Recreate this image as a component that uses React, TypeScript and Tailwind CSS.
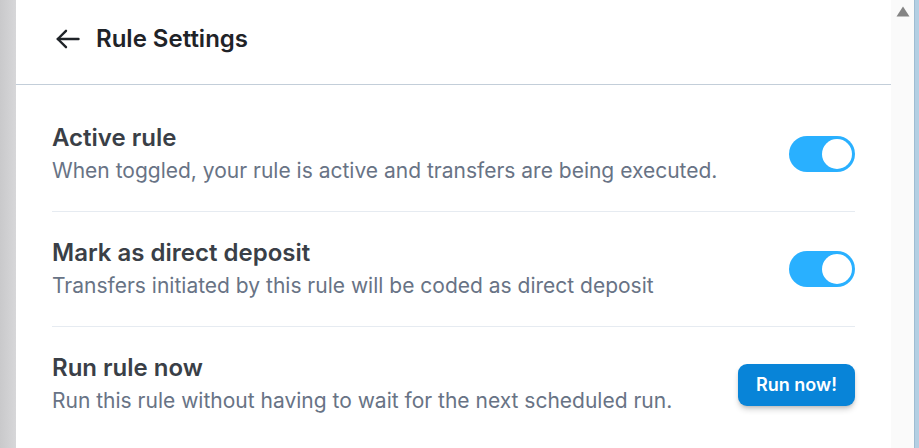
import React from 'react';

type RuleRowProps = {
  title: string;
  description: string;
  children: React.ReactNode;
  last?: boolean;
};

const Toggle = ({ on }: { on: boolean }) => (
  <button
    type="button"
    className={`flex h-[36px] w-[66px] items-center rounded-full p-[3px] ${on ? 'justify-end bg-[#29b0ff]' : 'justify-start bg-gray-300'}`}
  >
    <span className="block h-[30px] w-[30px] rounded-full bg-white" />
  </button>
);

const RuleRow = ({ title, description, children, last }: RuleRowProps) => (
  <div className={`flex h-[115px] items-center justify-between ${last ? '' : 'border-b border-[#e6ebf1]'}`}>
    <div>
      <div className="text-[24px] font-semibold leading-[28px] text-[#3a3f47]">{title}</div>
      <div className="mt-[5px] text-[21px] leading-[28px] text-[#687385]">{description}</div>
    </div>
    {children}
  </div>
);

export default function App() {
  return (
    <div className="flex h-[448px] w-full overflow-hidden bg-white" style={{ fontFamily: 'Inter, "Noto Sans", sans-serif' }}>
      <div className="w-[16px] shrink-0 bg-gradient-to-r from-[#c9c9cb] to-[#d7d7d9]" />

      <div className="flex-1 bg-white">
        <div className="flex h-[85px] items-center gap-[16px] border-b border-[#c3ced9] pl-[40px] pb-[6px]">
          <svg width="24" height="20" viewBox="0 0 24 20" fill="none" stroke="#1f2328" strokeWidth="2.4" strokeLinecap="round" strokeLinejoin="round">
            <path d="M22.5 10H1.8" />
            <path d="M10 1.8 1.8 10 10 18.2" />
          </svg>
          <h1 className="text-[24px] font-semibold text-[#1f2328]">Rule Settings</h1>
        </div>

        <div className="px-[36px] pt-[12px]">
          <RuleRow title="Active rule" description="When toggled, your rule is active and transfers are being executed.">
            <Toggle on />
          </RuleRow>
          <RuleRow title="Mark as direct deposit" description="Transfers initiated by this rule will be coded as direct deposit">
            <Toggle on />
          </RuleRow>
          <RuleRow title="Run rule now" description="Run this rule without having to wait for the next scheduled run." last>
            <button
              type="button"
              className="h-[42px] w-[117px] rounded-[9px] bg-[#0884d8] text-[18px] font-semibold text-white shadow-md shadow-black/20"
            >
              Run now!
            </button>
          </RuleRow>
        </div>
      </div>

      <div className="flex w-[23px] shrink-0 justify-center bg-[#fafafa] pt-[6px]">
        <svg width="14" height="11" viewBox="0 0 14 11">
          <path d="M7 0.5 13.5 10.5H0.5Z" fill="#848484" />
        </svg>
      </div>
      <div className="w-[5px] shrink-0 border-l border-[#9fbdd2] bg-[#b3cfe3]" />
    </div>
  );
}
